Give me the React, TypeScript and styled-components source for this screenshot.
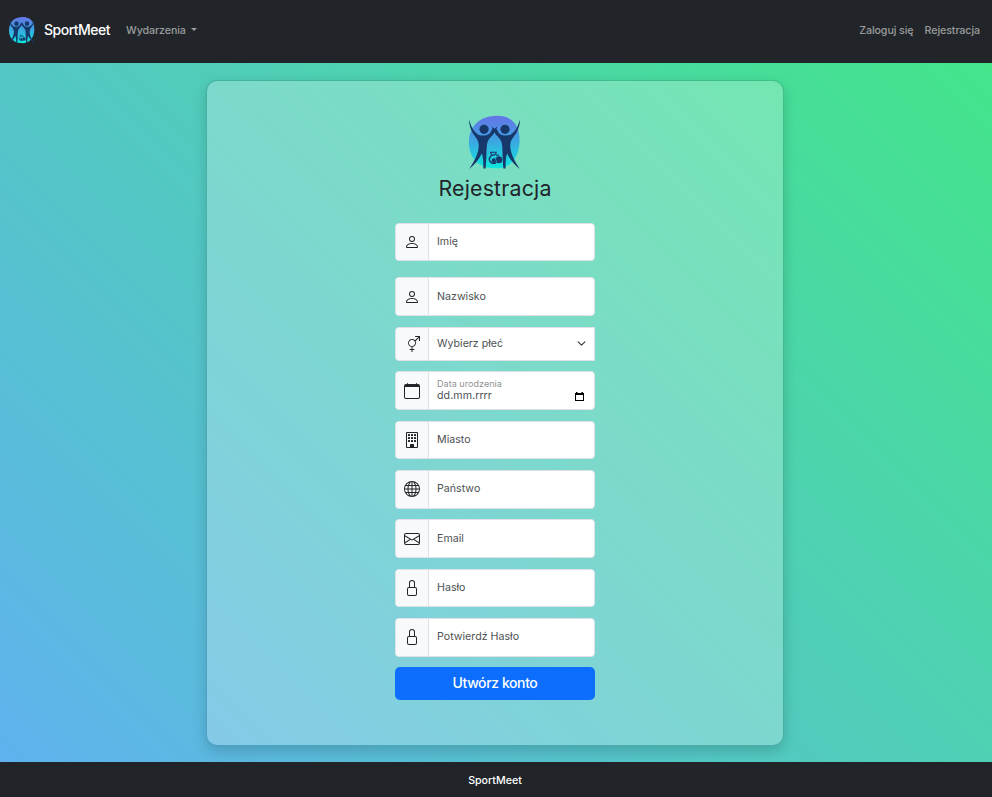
import React from "react";
import styled, { createGlobalStyle } from "styled-components";
import {
  BsPerson,
  BsGenderAmbiguous,
  BsCalendar,
  BsBuilding,
  BsGlobe,
  BsEnvelope,
  BsLock,
} from "react-icons/bs";

const GlobalStyle = createGlobalStyle`
  *, *::before, *::after { box-sizing: border-box; }
  body {
    margin: 0;
    font-family: Inter, "Liberation Sans", sans-serif;
    font-size: 10.67px;
    line-height: 1.5;
    color: #212529;
  }
`;

const Page = styled.div`
  height: 797px;
  display: flex;
  flex-direction: column;
  overflow: hidden;
`;

const Navbar = styled.nav`
  height: 63px;
  flex: none;
  display: flex;
  align-items: center;
  padding: 0 12px 2px 8px;
  background: #212529;
`;

const NavLogo = styled.span`
  display: flex;
  width: 27px;
  height: 29px;
  margin: 0 9px 0 0;
`;

const Brand = styled.span`
  font-size: 14px;
  font-weight: 500;
  letter-spacing: -0.5px;
  color: #fff;
  margin: 0 16px 2px 0;
`;

const NavLink = styled.a<{ $gap?: number }>`
  display: flex;
  align-items: center;
  font-weight: 500;
  letter-spacing: -0.08px;
  color: rgba(255, 255, 255, 0.55);
  margin-left: ${(p) => p.$gap ?? 0}px;
`;

const Caret = styled.span`
  margin: 0 0 2px 5px;
  border: 3px solid transparent;
  border-top-color: currentColor;
  border-bottom: 0;
`;

const Spacer = styled.div`
  flex: 1;
`;

const Main = styled.main`
  flex: 1;
  display: flex;
  justify-content: center;
  align-items: flex-start;
  padding: 17px 2px 0 0;
  background: linear-gradient(45deg, #5fb2ee 0%, #43e58b 100%);
`;

const Card = styled.section`
  width: 578px;
  height: 666px;
  display: flex;
  flex-direction: column;
  align-items: center;
  padding-top: 33px;
  border: 1px solid rgba(0, 0, 0, 0.13);
  border-radius: 11px;
  background: rgba(255, 255, 255, 0.25);
  background-clip: padding-box;
  box-shadow: 0 5px 14px rgba(0, 0, 0, 0.17);
`;

const CardLogo = styled.div`
  display: flex;
  width: 54px;
  height: 58px;
  margin-right: 2px;
`;

const Title = styled.h1`
  margin: 2px 0 0;
  height: 48.8px;
  font-size: 21.33px;
  font-weight: 400;
  line-height: 28px;
  letter-spacing: 0.2px;
`;

const Form = styled.form`
  width: 200px;
  display: flex;
  flex-direction: column;
  gap: 10.67px;
`;

const Group = styled.div<{ $select?: boolean; $spaced?: boolean }>`
  display: flex;
  height: ${(p) => (p.$select ? 33.9 : 38.67)}px;
  margin-bottom: ${(p) => (p.$spaced ? 5.33 : 0)}px;
  border: 1px solid #dee2e6;
  border-radius: ${(p) => (p.$select ? "4px 0 0 4px" : "4px")};
  background: #fff;
  overflow: hidden;
`;

const Addon = styled.span`
  width: 33px;
  flex: none;
  display: flex;
  align-items: center;
  justify-content: center;
  border-right: 1px solid #dee2e6;
  background: #f8f9fa;
  font-size: 16px;
`;

const Field = styled.div`
  flex: 1;
  display: flex;
  align-items: center;
  justify-content: space-between;
  padding: 0 8px 0 8px;
  color: #4d5154;
`;

const DateText = styled.div`
  display: flex;
  flex-direction: column;
  margin-bottom: 2px;
  line-height: 12px;
  letter-spacing: 0.05px;
`;

const SmallLabel = styled.span`
  font-size: 9px;
  color: #909294;
`;

const Chevron = styled.svg`
  width: 9px;
  height: 9px;
  color: #343a40;
`;

const PickerIcon = styled.svg`
  width: 9px;
  height: 10px;
  margin: 12px 2px 0 0;
  color: #000;
`;

const Submit = styled.button`
  height: 33px;
  padding: 0 0 2px;
  border: 0;
  border-radius: 5px;
  background: #0d6efd;
  color: #fff;
  font: 500 14px Inter, "Liberation Sans", sans-serif;
  letter-spacing: -0.4px;
`;

const Footer = styled.footer`
  height: 35px;
  flex: none;
  display: flex;
  align-items: center;
  justify-content: center;
  padding: 2px 2px 0 0;
  background: #212529;
  color: #fff;
  font-weight: 500;
`;

function Figure() {
  return (
    <>
      <circle cx="17" cy="15.3" r="4.6" />
      <path d="M2 5.5C4 12 6 17 11 20.4C15 22.3 20 22 23 19.2L25.4 15L25 12.2L27 15L29.5 13.5L27.5 18.5C25.5 22 22 24 20.5 28C19 34 20 41 18.6 54.5L16.4 54.5C16.3 47 16.2 43 14.8 39.5C12 46 7 51 2.2 55C6.5 48 10.5 42 11.6 34C12.2 29 11 26 8.5 23C4.3 18 2 12 2 5.5Z" />
    </>
  );
}

function Logo({ id }: { id: string }) {
  return (
    <svg width="100%" height="100%" viewBox="0 0 54 58">
      <defs>
        <linearGradient id={id} x1="0" y1="0" x2="0" y2="1">
          <stop offset="0" stopColor="#6673e8" />
          <stop offset="0.5" stopColor="#3aa9e2" />
          <stop offset="1" stopColor="#0ee8dc" />
        </linearGradient>
      </defs>
      <path
        d="M27 2C38 1 47 5 51 15C54 25 53 39 46 47C40 54 32 55 24 54C11 53 3 44 2 31C1 14 11 3 27 2Z"
        fill={`url(#${id})`}
      />
      <g fill="#17386b">
        <Figure />
        <g transform="translate(55 0) scale(-1 1)">
          <Figure />
        </g>
        <circle cx="31.8" cy="45.8" r="3.5" />
        <circle cx="27" cy="46.6" r="2.4" />
      </g>
      <g fill="none" stroke="#17386b" strokeWidth="1.1">
        <path d="M24.6 41L23.6 38.2H29.2L28.6 41" />
        <path d="M28 41C24.5 40.4 21.8 43 22.4 46C23 49 26 50 29 49" strokeWidth="1.4" />
        <path d="M29 41.2H32" />
      </g>
      <path d="M29 43.2Q28 45.5 29.6 47.8" fill="none" stroke="#1cc4de" strokeWidth="0.7" />
    </svg>
  );
}

interface InputProps {
  icon: React.ReactNode;
  label: string;
  spaced?: boolean;
}

function Input({ icon, label, spaced }: InputProps) {
  return (
    <Group $spaced={spaced}>
      <Addon>{icon}</Addon>
      <Field>{label}</Field>
    </Group>
  );
}

export default function App() {
  return (
    <Page>
      <GlobalStyle />
      <Navbar>
        <NavLogo>
          <Logo id="nav-logo" />
        </NavLogo>
        <Brand>SportMeet</Brand>
        <NavLink>
          Wydarzenia
          <Caret />
        </NavLink>
        <Spacer />
        <NavLink>Zaloguj się</NavLink>
        <NavLink $gap={11}>Rejestracja</NavLink>
      </Navbar>
      <Main>
        <Card>
          <CardLogo>
            <Logo id="card-logo" />
          </CardLogo>
          <Title>Rejestracja</Title>
          <Form>
            <Input icon={<BsPerson />} label="Imię" spaced />
            <Input icon={<BsPerson />} label="Nazwisko" />
            <Group $select>
              <Addon>
                <BsGenderAmbiguous />
              </Addon>
              <Field>
                Wybierz płeć
                <Chevron viewBox="0 0 16 16" fill="none" stroke="currentColor" strokeWidth="2" strokeLinecap="round" strokeLinejoin="round">
                  <path d="m2 5 6 6 6-6" />
                </Chevron>
              </Field>
            </Group>
            <Group>
              <Addon>
                <BsCalendar />
              </Addon>
              <Field>
                <DateText>
                  <SmallLabel>Data urodzenia</SmallLabel>
                  <span>dd.mm.rrrr</span>
                </DateText>
                <PickerIcon viewBox="0 0 9 10">
                  <path d="M1 1V0H2.5V1H6.5V0H8V1H9V9H0V1ZM1 3V8H8V3Z" fill="currentColor" fillRule="evenodd" />
                </PickerIcon>
              </Field>
            </Group>
            <Input icon={<BsBuilding />} label="Miasto" />
            <Input icon={<BsGlobe />} label="Państwo" />
            <Input icon={<BsEnvelope />} label="Email" />
            <Input icon={<BsLock />} label="Hasło" />
            <Input icon={<BsLock />} label="Potwierdź Hasło" />
            <Submit type="button">Utwórz konto</Submit>
          </Form>
        </Card>
      </Main>
      <Footer>SportMeet</Footer>
    </Page>
  );
}
